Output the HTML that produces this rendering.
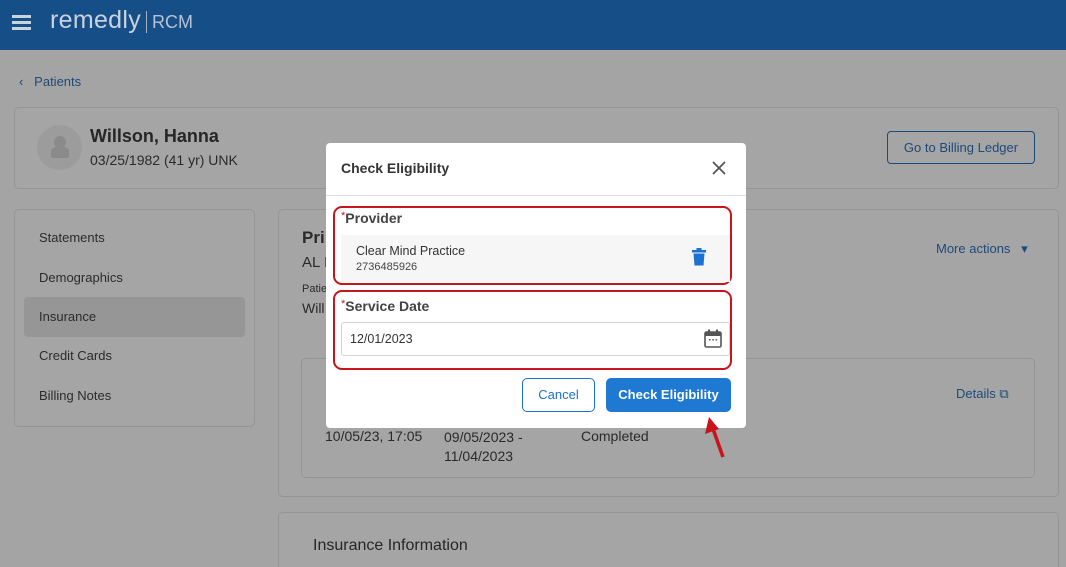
<!DOCTYPE html>
<html style="overflow:hidden;width:1066px;height:567px"><head><style>
*{box-sizing:border-box;margin:0;padding:0}
body{width:1066px;height:567px;overflow:hidden;background:#a4a4a4;font-family:"Liberation Sans",sans-serif;position:relative;color:#2a2a2a}
.abs{position:absolute}
.card{position:absolute;border:1px solid #959595;border-radius:5px;background:#a5a5a5}
.hd{left:0;top:0;width:1066px;height:50px;background:#164e87}
.side{font-size:13px;color:#2b2b2b}
.link{color:#1d4a7a}
.rbox{position:absolute;border:2px solid #c8141c;border-radius:9px}
</style></head><body>
<div class="abs hd">
 <div class="abs" style="left:12px;top:15px;width:19px;height:3px;background:#c9d3de;box-shadow:0 6px 0 #c9d3de,0 12px 0 #c9d3de"></div>
 <div class="abs" style="left:50px;top:6px;font-size:25px;color:#c9d3de;letter-spacing:0.3px">remedly</div>
 <div class="abs" style="left:146px;top:11px;width:1px;height:22px;background:#9fb0c3"></div>
 <div class="abs" style="left:152px;top:12px;font-size:18px;color:#b5c3d3">RCM</div>
</div>
<div class="abs link" style="left:19px;top:74px;font-size:13px">‹&nbsp;&nbsp;&nbsp;Patients</div>
<div class="card" style="left:14px;top:107px;width:1045px;height:82px"></div>
<div class="abs" style="left:37px;top:125px;width:45px;height:45px;border-radius:50%;background:#9c9c9c"></div>
<div class="abs" style="left:54px;top:136px;width:12px;height:12px;border-radius:50%;background:#8a8a8a"></div>
<div class="abs" style="left:51px;top:147px;width:18px;height:11px;border-radius:5px 5px 2px 2px;background:#8a8a8a"></div>
<div class="abs" style="left:90px;top:126px;font-size:18px;font-weight:bold;color:#262626">Willson, Hanna</div>
<div class="abs" style="left:90px;top:152px;font-size:14px;color:#2a2a2a">03/25/1982 (41 yr) UNK</div>
<div class="abs link" style="left:887px;top:131px;width:148px;height:33px;border:1px solid #1d4a7a;border-radius:4px;font-size:13px;text-align:center;line-height:31px">Go to Billing Ledger</div>

<div class="card" style="left:14px;top:209px;width:241px;height:218px"></div>
<div class="abs" style="left:24px;top:297px;width:221px;height:40px;background:#969696;border-radius:4px"></div>
<div class="abs side" style="left:39px;top:230px">Statements</div>
<div class="abs side" style="left:39px;top:270px">Demographics</div>
<div class="abs side" style="left:39px;top:309px">Insurance</div>
<div class="abs side" style="left:39px;top:348px">Credit Cards</div>
<div class="abs side" style="left:39px;top:388px">Billing Notes</div>

<div class="card" style="left:278px;top:209px;width:781px;height:288px"></div>
<div class="abs" style="left:302px;top:228px;font-size:17px;font-weight:bold">Pri</div>
<div class="abs" style="left:302px;top:254px;font-size:15px">AL I</div>
<div class="abs" style="left:302px;top:283px;font-size:11px">Patie</div>
<div class="abs" style="left:302px;top:300px;font-size:14px">Will</div>
<div class="abs link" style="left:936px;top:241px;font-size:13px">More actions&nbsp;&nbsp;&nbsp;▾</div>
<div class="card" style="left:301px;top:358px;width:734px;height:120px"></div>
<div class="abs link" style="left:956px;top:386px;font-size:13px">Details ⧉</div>
<div class="abs" style="left:325px;top:428px;font-size:14px">10/05/23, 17:05</div>
<div class="abs" style="left:444px;top:428px;font-size:14px;line-height:19px">09/05/2023 -<br>11/04/2023</div>
<div class="abs" style="left:581px;top:428px;font-size:14px">Completed</div>
<div class="card" style="left:278px;top:512px;width:781px;height:55px;border-bottom:none;border-radius:5px 5px 0 0"></div>
<div class="abs" style="left:313px;top:537px;font-size:16px;color:#262626">Insurance Information</div>

<div class="abs" style="left:326px;top:143px;width:420px;height:285px;background:#fff;border-radius:4px">
 <div class="abs" style="left:15px;top:17px;font-size:14px;font-weight:bold;color:#333">Check Eligibility</div>
 <svg class="abs" style="left:386px;top:18px" width="14" height="14"><path d="M1 1L13 13M13 1L1 13" stroke="#555" stroke-width="1.8"/></svg>
 <div class="abs" style="left:0;top:52px;width:420px;height:1px;background:#ddd"></div>
 <div class="rbox" style="left:7px;top:63px;width:399px;height:79px"></div>
 <div class="abs" style="left:15px;top:67px;font-size:14px;font-weight:bold;color:#444"><span style="color:#c8141c;font-weight:normal;font-size:11px;vertical-align:top">*</span>Provider</div>
 <div class="abs" style="left:15px;top:92px;width:389px;height:47px;background:#f6f6f6"></div>
 <div class="abs" style="left:30px;top:101px;font-size:12.5px;color:#333">Clear Mind Practice</div>
 <div class="abs" style="left:30px;top:118px;font-size:11px;color:#444">2736485926</div>
 <svg class="abs" style="left:366px;top:105px" width="14" height="18"><rect x="0" y="2" width="14" height="2.5" fill="#1a73d0"/><rect x="4.5" y="0" width="5" height="2" fill="#1a73d0"/><path d="M1.5 5.5h11l-1 12h-9z" fill="#1a73d0"/></svg>
 <div class="rbox" style="left:7px;top:147px;width:399px;height:80px"></div>
 <div class="abs" style="left:15px;top:155px;font-size:14px;font-weight:bold;color:#444"><span style="color:#c8141c;font-weight:normal;font-size:11px;vertical-align:top">*</span>Service Date</div>
 <div class="abs" style="left:15px;top:179px;width:389px;height:34px;border:1px solid #d4d4d4;border-radius:3px"></div>
 <div class="abs" style="left:24px;top:189px;font-size:12.5px;color:#333">12/01/2023</div>
 <svg class="abs" style="left:378px;top:186px" width="18" height="19"><rect x="1" y="3" width="16" height="15" rx="1.5" fill="none" stroke="#555" stroke-width="1.6"/><rect x="1" y="3" width="16" height="4" fill="#555"/><rect x="4" y="0.5" width="2" height="3" fill="#555"/><rect x="12" y="0.5" width="2" height="3" fill="#555"/><rect x="5" y="10" width="1.5" height="1.5" fill="#555"/><rect x="8.3" y="10" width="1.5" height="1.5" fill="#555"/><rect x="11.6" y="10" width="1.5" height="1.5" fill="#555"/></svg>
 <div class="abs" style="left:196px;top:235px;width:73px;height:34px;border:1px solid #1a73d0;border-radius:5px;color:#1a73d0;font-size:13px;text-align:center;line-height:32px">Cancel</div>
 <div class="abs" style="left:280px;top:235px;width:125px;height:34px;background:#1f78d1;border-radius:5px;color:#fff;font-size:13px;font-weight:bold;text-align:center;line-height:34px">Check Eligibility</div>
</div>
<svg class="abs" style="left:700px;top:412px" width="30" height="50"><path d="M23 45L12 14" stroke="#c8141c" stroke-width="3.5"/><path d="M9 5L5 22L19 17z" fill="#c8141c"/></svg>
</body></html>
